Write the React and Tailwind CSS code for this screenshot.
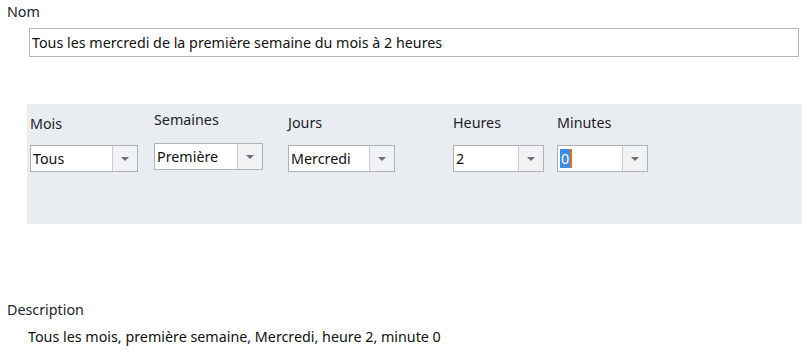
import React from "react";

function Combo({ value, width, selected }) {
  return (
    <div className="flex h-[27px] border border-[#adb1b8] bg-white" style={{ width }}>
      <div className="flex-1 flex items-center pl-[2px] text-[14.3px] text-[#111]">
        {selected ? (
          <span className="bg-[#3a8ee6] text-white leading-[19px] px-[1px] border-r-2 border-[#e0701a]">{value}</span>
        ) : (
          value
        )}
      </div>
      <div className="w-[25px] border-l border-[#c9ccd1] bg-[#f1f2f4] flex items-center justify-center">
        <div className="w-0 h-0 border-l-[4px] border-r-[4px] border-t-[4px] border-l-transparent border-r-transparent border-t-[#6b6e73]" />
      </div>
    </div>
  );
}

function Field({ label, value, width, ml, labelMt = "mt-[11px]", comboMt = "mt-[11px]", selected }) {
  return (
    <div className="flex flex-col" style={{ marginLeft: ml }}>
      <div className={`${labelMt} h-[20px] leading-[20px] text-[14.3px] text-[#1c1e2c]`}>{label}</div>
      <div className={comboMt}>
        <Combo value={value} width={width} selected={selected} />
      </div>
    </div>
  );
}

export default function App() {
  return (
    <div
      className="w-[811px] h-[358px] bg-white relative overflow-hidden"
      style={{ fontFamily: '"Noto Sans", "Open Sans", sans-serif' }}
    >
      <div className="pl-[7px] pt-[2px] h-[22px] leading-[20px] text-[14.3px] text-[#1c1e2c]">Nom</div>
      <div className="ml-[29px] mt-[6px] w-[770px] h-[29px] border border-[#b3b7be] bg-white flex items-center pl-[2px] text-[14.3px] text-[#111]">
        Tous les mercredi de la première semaine du mois à 2 heures
      </div>
      <div className="ml-[27px] mt-[47px] w-[775px] h-[120px] bg-[#e9ecf0] flex items-start">
        <Field label="Mois" value="Tous" width={108} ml={3} labelMt="mt-[10px]" comboMt="mt-[11px]" />
        <Field label="Semaines" value="Première" width={109} ml={16} labelMt="mt-[6px]" comboMt="mt-[13px]" />
        <Field label="Jours" value="Mercredi" width={107} ml={25} labelMt="mt-[9px]" comboMt="mt-[12px]" />
        <Field label="Heures" value="2" width={91} ml={58} labelMt="mt-[9px]" comboMt="mt-[12px]" />
        <Field label="Minutes" value="0" width={91} ml={13} labelMt="mt-[9px]" comboMt="mt-[12px]" selected />
      </div>
      <div className="pl-[7px] mt-[76px] h-[20px] leading-[20px] text-[14.3px] text-[#1c1e2c]">Description</div>
      <div className="pl-[28px] mt-[7px] h-[20px] leading-[20px] text-[14.3px] text-[#111]">
        Tous les mois, première semaine, Mercredi, heure 2, minute 0
      </div>
    </div>
  );
}
